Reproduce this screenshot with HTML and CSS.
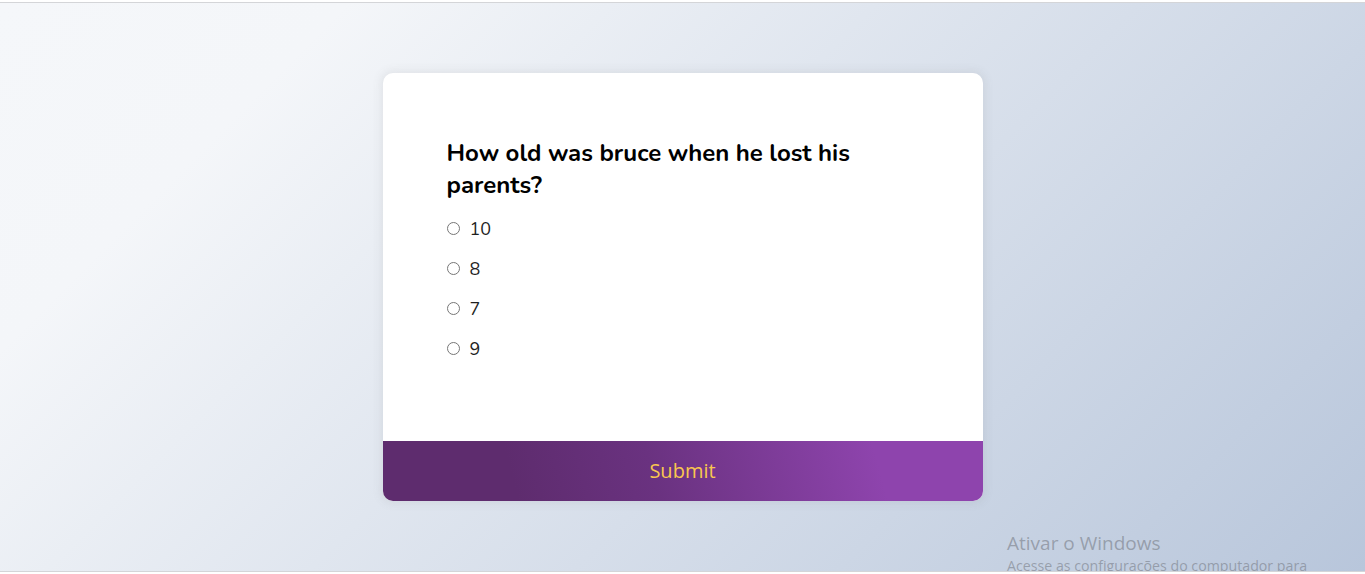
FILE: index.html
```html
<!DOCTYPE html>
<html lang="en">
<head>
<meta charset="utf-8">
<title>Quiz</title>
<link rel="stylesheet" href="styles.css">
</head>
<body>
<div class="frame">
  <main class="stage">
    <div class="quiz-container">
      <div class="quiz-header">
        <h2 class="question">How old was bruce when he lost his parents?</h2>
        <ul class="answers">
          <li><label class="answer"><input type="radio" name="answer"><span>10</span></label></li>
          <li><label class="answer"><input type="radio" name="answer"><span>8</span></label></li>
          <li><label class="answer"><input type="radio" name="answer"><span>7</span></label></li>
          <li><label class="answer"><input type="radio" name="answer"><span>9</span></label></li>
        </ul>
      </div>
      <button class="submit">Submit</button>
    </div>
    <div class="watermark">
      <div class="wm-title">Ativar o Windows</div>
      <div class="wm-sub">Acesse as configurações do computador para</div>
    </div>
  </main>
</div>
</body>
</html>
```
FILE: styles.css
```css
* { box-sizing: border-box; }
html, body { margin: 0; padding: 0; background: #ffffff; }
body { font-family: "Nunito", "Lato", "Open Sans", sans-serif; }
.frame {
  height: 574px;
  padding: 2px 0 2px;
  display: flex;
  flex-direction: column;
}
.stage {
  position: relative;
  flex: 1;
  overflow: hidden;
  border-top: 1px solid #d4d5d8;
  border-bottom: 1px solid #d4d5d8;
  background-image: linear-gradient(135deg, #f5f7fa 0%, #f4f6f9 18%, #b8c6db 100%);
  display: flex;
  align-items: center;
  justify-content: center;
}
.quiz-container {
  width: 600px;
  background: #ffffff;
  border-radius: 10px;
  box-shadow: 0 0 10px 2px rgba(100, 100, 100, 0.1);
  overflow: hidden;
  margin-top: -1px;
}
.quiz-header { padding: 64px; }
.question {
  margin: 0;
  font-size: 24px;
  line-height: 32px;
  font-weight: 700;
  color: #000;
}
.answers { list-style: none; margin: 0; padding: 0; }
.answers li { margin: 16px 0; font-size: 18px; line-height: 24px; }
.answer { display: flex; align-items: center; gap: 8px; color: #1f1f1f; }
.answer input { margin: 0 2px 0 0; width: 13px; height: 13px; }
.submit {
  display: block;
  width: 100%;
  height: 60px;
  border: none;
  background-image: linear-gradient(75deg, #5e2c6e 22%, #6a3280 45%, #8e44ad 82%);
  color: #f9c74f;
  font-family: "Open Sans", sans-serif;
  font-size: 20px;
  cursor: pointer;
}
.watermark {
  position: absolute;
  left: 1007px;
  top: 527px;
  color: rgba(120, 125, 135, 0.6);
  font-family: "Open Sans", sans-serif;
  white-space: nowrap;
}
.wm-title { font-size: 19px; line-height: 26px; }
.wm-sub { font-size: 14.2px; line-height: 20px; }
```
